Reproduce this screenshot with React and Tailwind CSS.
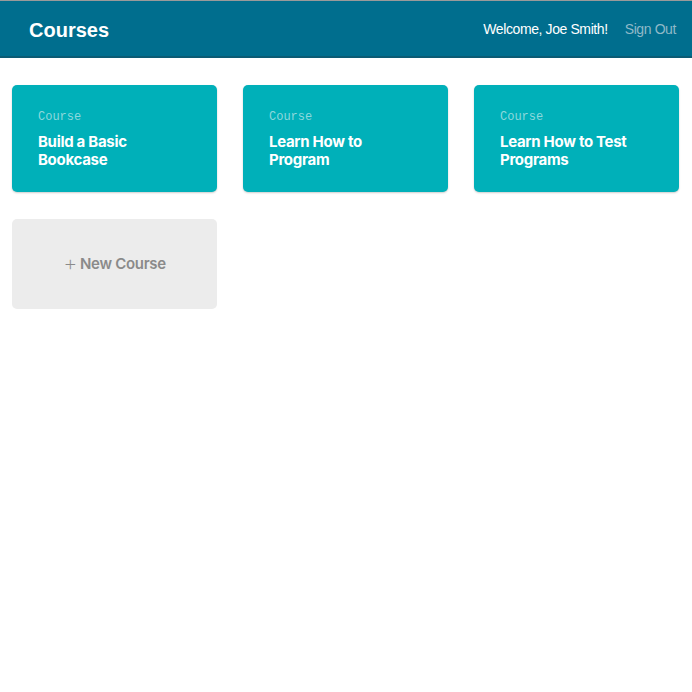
export default function App() {
  const courses = ["Build a Basic Bookcase", "Learn How to Program", "Learn How to Test Programs"];
  return (
    <div className="min-h-[692px] bg-white" style={{ fontFamily: "Inter, 'Liberation Sans', sans-serif" }}>
      <div className="border-t border-[#9a9a9a]">
        <header className="h-[57px] bg-[#006e8e] border-b-2 border-[#0b5b74] flex items-center justify-between pl-[29px] pr-[16px]">
          <h1 className="text-white text-[20px] font-bold mt-[2px]" style={{ fontFamily: "'Liberation Sans', Arial, sans-serif" }}>Courses</h1>
          <div className="flex items-center gap-[17px] text-[14px] tracking-[-0.4px] mt-[1px]" style={{ fontFamily: "'Liberation Sans', Arial, sans-serif" }}>
            <span className="text-white">Welcome, Joe Smith!</span>
            <span className="text-[#8fb9c8]">Sign Out</span>
          </div>
        </header>
      </div>
      <main className="grid grid-cols-3 gap-x-[26px] gap-y-[27px] pl-3 pr-[13px] pt-[27px]">
        {courses.map((c) => (
          <div key={c} className="h-[107px] rounded-[5px] bg-[#00b0b9] shadow-[0_1px_2px_rgba(0,0,0,0.2)] px-[26px] pt-[24px]">
            <div className="text-[12px] leading-[16px] text-[#8dd8dc]" style={{ fontFamily: "'Liberation Mono', monospace" }}>Course</div>
            <div className="mt-[8px] text-white text-[15px] leading-[18px] font-bold tracking-[-0.3px]">{c}</div>
          </div>
        ))}
        <div className="h-[90px] rounded-[5px] bg-[#ececec] flex items-center justify-center text-[#8a8a8a] text-[15px] font-semibold tracking-[-0.3px]">
          <span className="font-extralight text-[22px] mr-[3px] leading-none mt-[-2px]">+</span>New Course
        </div>
      </main>
    </div>
  );
}
